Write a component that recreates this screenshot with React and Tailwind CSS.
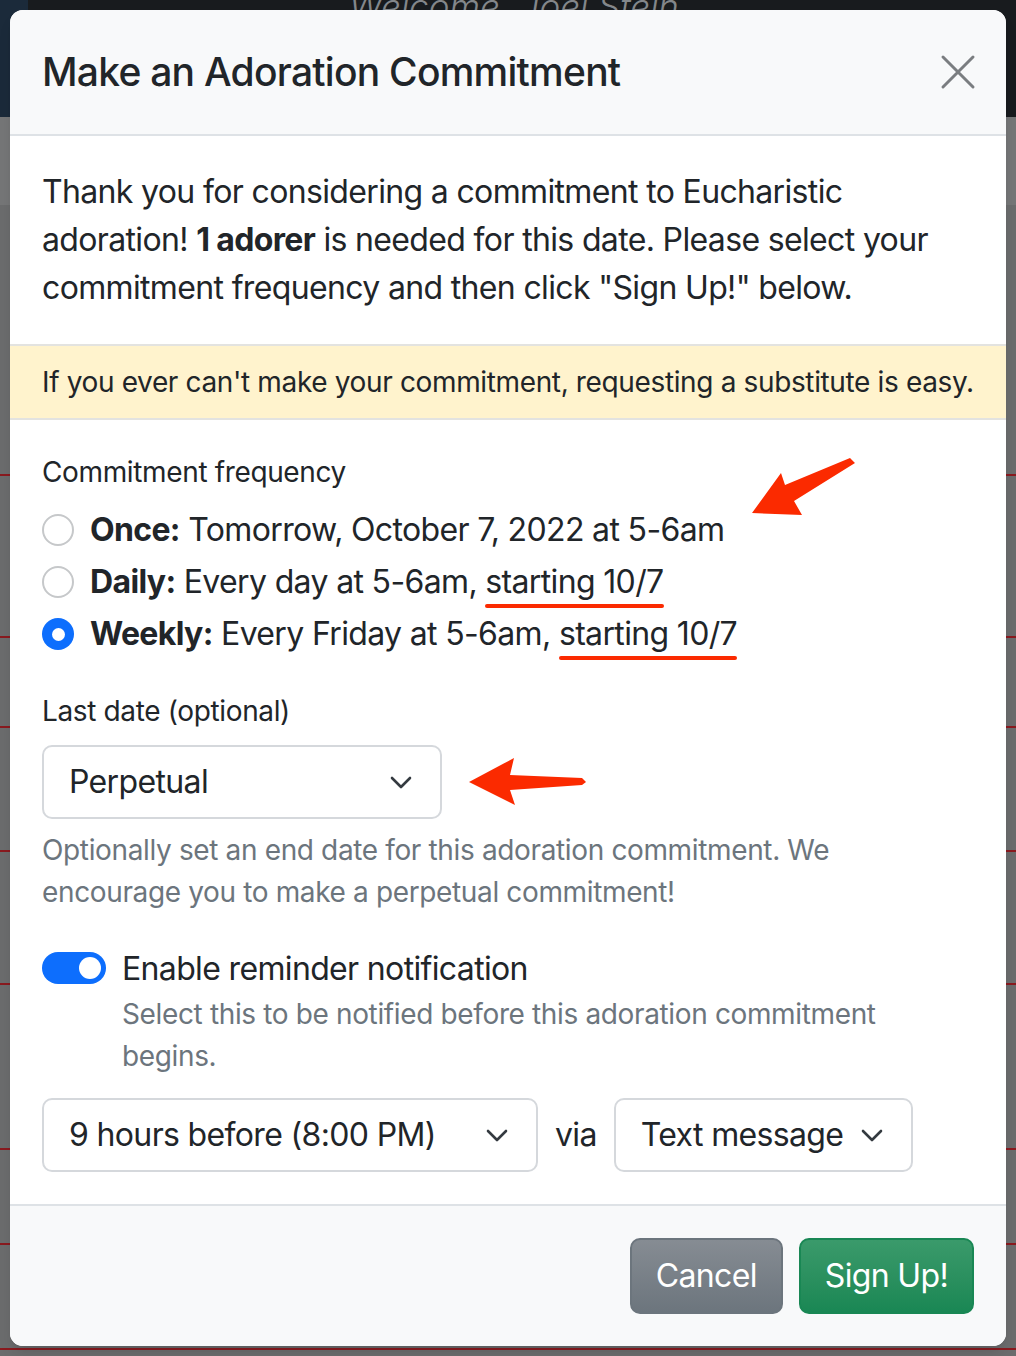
import React from 'react';

const font = { fontFamily: 'Inter, "Noto Sans", "Liberation Sans", sans-serif' };

// SF-like widths: Inter runs a bit wide, so tighten it per size
const t32 = 'text-[32px] tracking-[-0.65px]';
const t28 = 'text-[28px] tracking-[-0.36px]';

function Chevron() {
  return (
    <svg width="22" height="13" viewBox="0 0 22 13">
      <polyline points="2,2 11,11 20,2" fill="none" stroke="#343a40" strokeWidth="2.6" strokeLinecap="round" strokeLinejoin="round" />
    </svg>
  );
}

function Select({ value, className = '' }) {
  return (
    <div className={`flex h-[74px] items-center justify-between rounded-[10px] border-2 border-[#d5d8dc] bg-white pl-[25px] pr-[28px] ${t32} text-[#212529] ${className}`}>
      <span>{value}</span>
      <Chevron />
    </div>
  );
}

function Radio({ checked }) {
  return checked ? (
    <span className="flex h-[32px] w-[32px] shrink-0 items-center justify-center rounded-full bg-[#0d6efd]">
      <span className="h-[13px] w-[13px] rounded-full bg-white" />
    </span>
  ) : (
    <span className="h-[32px] w-[32px] shrink-0 rounded-full border-2 border-[#c6c8ca] bg-white" />
  );
}

function Marked({ children }) {
  return (
    <span className="relative">
      {children}
      <span className="absolute left-0 right-0 top-[42px] h-[4px] rounded-full bg-[#fb2a00]" />
    </span>
  );
}

function Background() {
  const rows = [
    'h-[271px]',
    'h-[162px]',
    'h-[90px]',
    'h-[124px]',
    'h-[133px]',
    'h-[165px]',
    'h-[95px]',
    'h-[105px]',
  ];
  return (
    <div className="flex flex-col">
      <div className="flex h-[117px] bg-[#181b1e]">
        <div className="w-[28px] bg-[#1b2a3a]" />
        <div className="flex flex-1 justify-center overflow-hidden pr-[16px]">
          <span className="-mt-[20px] text-[35px] italic font-light text-[#83878b]">Welcome, Joel Stein</span>
        </div>
      </div>
      <div className="h-[88px] bg-[#757677]" />
      {rows.map((h, i) => (
        <div key={i} className={`${h} border-b-2 border-[#8a1a1f]`} />
      ))}
    </div>
  );
}

export default function App() {
  return (
    <div className="relative h-[1356px] w-[1016px] overflow-hidden bg-[#6b6c6d]" style={font}>
      <Background />

      <div className="absolute left-[10px] top-[10px] w-[996px] overflow-hidden rounded-[13px] bg-white shadow-lg">
        {/* header */}
        <div className="flex h-[126px] items-center justify-between border-b-2 border-[#dee2e6] bg-[#f8f9fa] pl-[32px] pr-[30px]">
          <h5 className="text-[39px] font-medium tracking-[-0.75px] text-[#212529]">Make an Adoration Commitment</h5>
          <svg width="36" height="36" viewBox="0 0 36 36">
            <path d="M3 3 L33 33 M33 3 L3 33" stroke="#7a7d80" strokeWidth="3" strokeLinecap="round" />
          </svg>
        </div>

        {/* intro */}
        <p className={`px-[32px] py-[32px] ${t32} leading-[48px] text-[#212529]`}>
          Thank you for considering a commitment to Eucharistic adoration! <b className="font-bold">1 adorer</b> is needed for this date. Please select your commitment frequency and then click "Sign Up!" below.
        </p>

        <div className={`border-y-2 border-[#e3e3e0] bg-[#fff3cd] px-[32px] py-[15px] ${t28} leading-[42px] text-[#212529]`}>
          If you ever can't make your commitment, requesting a substitute is easy.
        </div>

        {/* form */}
        <div className="px-[32px] pt-[30px] pb-[32px] text-[#212529]">
          <div className="relative">
            <div className={`mb-[12px] ${t28} leading-[44px]`}>Commitment frequency</div>
            <div className={`flex flex-col gap-[4px] ${t32}`}>
              <label className="flex h-[48px] items-center gap-[16px]">
                <Radio />
                <span><b className="font-bold">Once:</b> Tomorrow, October 7, 2022 at 5-6am</span>
              </label>
              <label className="flex h-[48px] items-center gap-[16px]">
                <Radio />
                <span><b className="font-bold">Daily:</b> Every day at 5-6am, <Marked>starting 10/7</Marked></span>
              </label>
              <label className="flex h-[48px] items-center gap-[16px]">
                <Radio checked />
                <span><b className="font-bold">Weekly:</b> Every Friday at 5-6am, <Marked>starting 10/7</Marked></span>
              </label>
            </div>
            <svg className="absolute left-[698px] top-[-4px]" width="120" height="70" viewBox="700 445 120 70">
              <polygon points="712,512 741,472 745,484 810,457 815,462 754,500 762,514" fill="#fb2a00" />
            </svg>
          </div>

          <div className={`mt-[31px] mb-[12px] ${t28} leading-[44px]`}>Last date (optional)</div>
          <div className="flex items-center">
            <Select value="Perpetual" className="w-[400px]" />
            <svg className="ml-[24px]" width="120" height="52" viewBox="464 756 120 52">
              <polygon points="467,782 512,758 508,775 580,778 584,782 580,785 508,790 513,805" fill="#fb2a00" />
            </svg>
          </div>
          <p className={`mt-[10px] ${t28} leading-[42px] text-[#6c757d]`}>
            Optionally set an end date for this adoration commitment. We
            <br />
            encourage you to make a perpetual commitment!
          </p>

          <div className="mt-[32px] flex gap-[16px]">
            <div className="mt-[7px] flex h-[32px] w-[64px] shrink-0 items-center justify-end rounded-full bg-[#0d6efd] pr-[5px]">
              <span className="h-[22px] w-[22px] rounded-full bg-white" />
            </div>
            <div>
              <div className={`${t32} leading-[48px]`}>Enable reminder notification</div>
              <p className={`${t28} leading-[42px] text-[#6c757d]`}>
                Select this to be notified before this adoration commitment
                <br />
                begins.
              </p>
            </div>
          </div>

          <div className="mt-[21px] flex items-center">
            <Select value="9 hours before (8:00 PM)" className="w-[496px]" />
            <span className={`mx-[17px] ${t32}`}>via</span>
            <Select value="Text message" className="w-[299px]" />
          </div>
        </div>

        {/* footer */}
        <div className="flex justify-end gap-[16px] border-t-2 border-[#dee2e6] bg-[#f8f9fa] px-[32px] pt-[32px] pb-[32px]">
          <button className={`h-[76px] rounded-[10px] border-2 border-[#6c757d] bg-gradient-to-b from-[#868c93] to-[#6c757d] px-[24px] ${t32} text-white`}>
            Cancel
          </button>
          <button className={`h-[76px] rounded-[10px] border-2 border-[#198754] bg-gradient-to-b from-[#3a9a6b] to-[#198754] px-[24px] ${t32} text-white`}>
            Sign Up!
          </button>
        </div>
      </div>
    </div>
  );
}
